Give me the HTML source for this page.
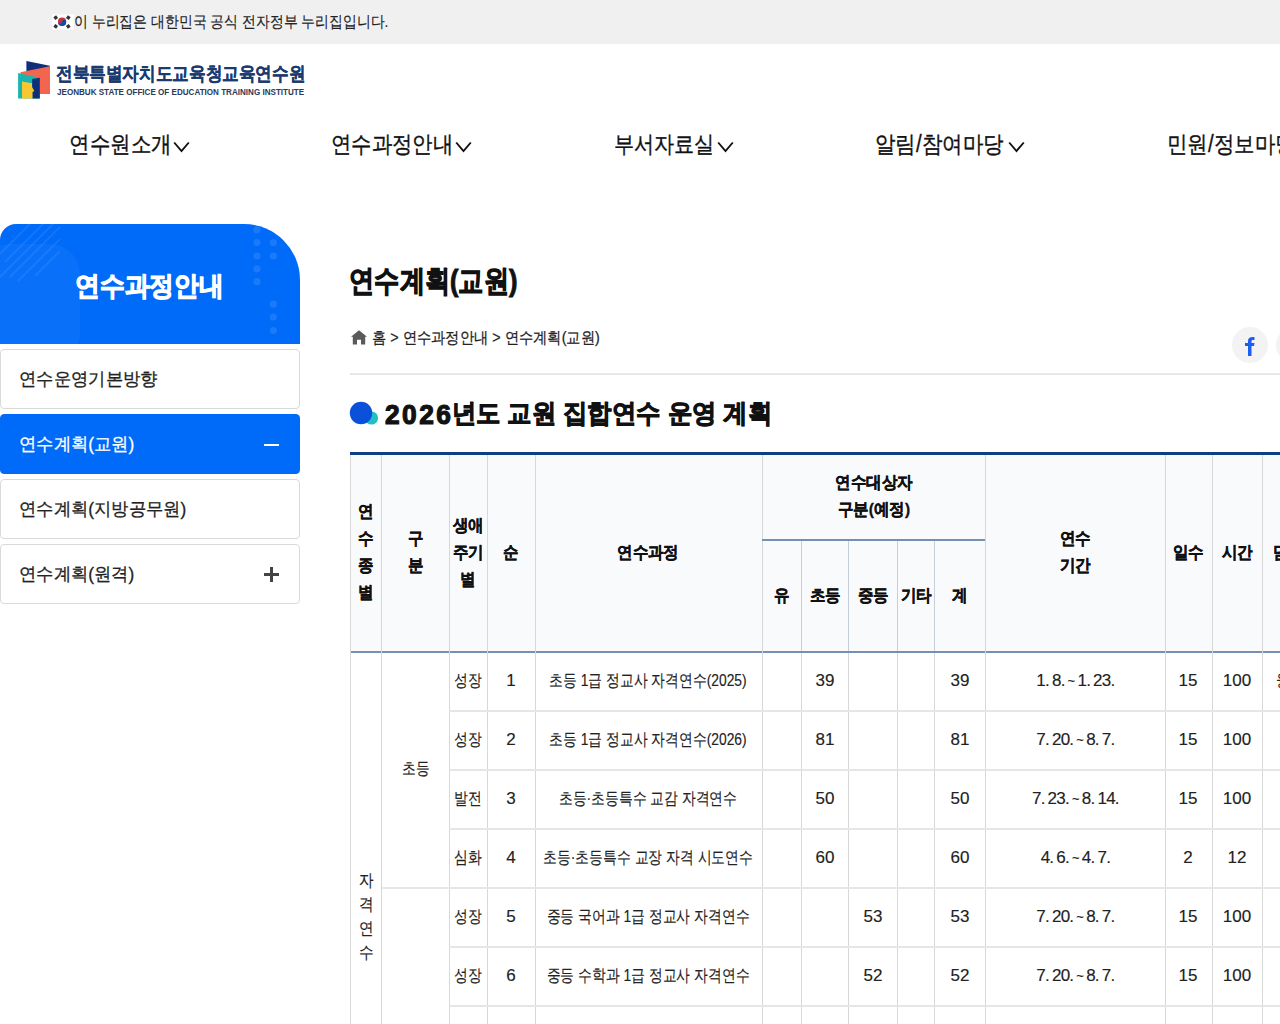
<!DOCTYPE html><html lang="ko"><head><meta charset="utf-8"><title>연수계획(교원)</title><style>
*{margin:0;padding:0;box-sizing:border-box}
html,body{width:1280px;height:1024px;overflow:hidden;background:#fff}
body{font-family:"Liberation Sans", sans-serif;color:#222;position:relative}
.ab{position:absolute;white-space:nowrap}
.ln{position:absolute}
.sk{-webkit-text-stroke:0.15px currentColor}
.skb{-webkit-text-stroke:0.5px currentColor}
.sktb{-webkit-text-stroke:0.35px currentColor}
</style></head><body>
<div class="ln" style="left:0;top:0;width:1280px;height:44px;background:#f0f0f0"></div>
<svg class="ab" style="left:52px;top:14px" width="22" height="16" viewBox="0 0 22 16">
<rect x="0" y="0.5" width="22" height="15" fill="#fff"/>
<circle cx="10.1" cy="7.7" r="4.1" fill="#c9303e"/>
<path d="M6 7.9 A4.1 4.1 0 0 0 14.2 7.9 A2.05 2.05 0 0 0 10.1 7.7 A2.05 2.05 0 0 1 6 7.5Z" fill="#0d4fa3"/>
<g fill="#333"><rect x="2" y="2" width="3.4" height="3.4" transform="rotate(-35 3.7 3.7)"/><rect x="14.6" y="2" width="3.4" height="3.4" transform="rotate(35 16.3 3.7)"/>
<rect x="2" y="10.6" width="3.4" height="3.4" transform="rotate(35 3.7 12.3)"/><rect x="14.6" y="10.6" width="3.4" height="3.4" transform="rotate(-35 16.3 12.3)"/></g>
</svg>
<div class="ab sk" id="t_top" style="left:74.00px;top:13.50px;font-size:16px;line-height:16px;font-weight:normal;color:#222;letter-spacing:0.000px;transform:scaleX(0.8670);transform-origin:0 0;">이 누리집은 대한민국 공식 전자정부 누리집입니다.</div>
<svg class="ab" style="left:17px;top:60px" width="35" height="40" viewBox="0 0 35 40">
<polygon points="9.4,1 32.8,5.8 32.8,14 9.4,14" fill="#0f2f7a"/>
<polygon points="3.3,12.2 33,6.2 33,34 12,34" fill="#f26650"/>
<polygon points="1.1,13.1 22.8,17.7 22.8,38.6 1.1,38.6" fill="#1ab5b0"/>
<polygon points="15.2,19 22.8,17.7 22.8,38.6 15.2,38.6" fill="#0f2f7a"/>
<polygon points="5,21.4 15,23.3 15,27 17.4,31.1 15.5,32 15.5,38.6 5,38.6" fill="#f9c830"/>
</svg>
<div class="ab skb" id="t_logo" style="left:56.00px;top:64.00px;font-size:19px;line-height:19px;font-weight:bold;color:#1b3a6e;letter-spacing:0.000px;transform:scaleX(0.8748);transform-origin:0 0;-webkit-text-stroke:0.25px currentColor;">전북특별자치도교육청교육연수원</div>
<div class="ab skb" id="t_logo_en" style="left:57.00px;top:87.50px;font-size:9.2px;line-height:9.2px;font-weight:bold;color:#2b3a5a;letter-spacing:0.000px;transform:scaleX(0.8788);transform-origin:0 0;-webkit-text-stroke:0px currentColor;">JEONBUK STATE OFFICE OF EDUCATION TRAINING INSTITUTE</div>
<div class="ab sk" id="n1" style="left:69.00px;top:133.00px;font-size:23px;line-height:23px;font-weight:normal;color:#111;letter-spacing:0.000px;transform:scaleX(0.8920);transform-origin:0 0;-webkit-text-stroke:0.35px currentColor;">연수원소개</div>
<svg class="ab" style="left:173px;top:141px" width="17" height="12" viewBox="0 0 17 12"><path d="M1.2 1.5 L8.5 10 L15.8 1.5" fill="none" stroke="#111" stroke-width="1.9"/></svg>
<div class="ab sk" id="n2" style="left:331.40px;top:132.60px;font-size:23px;line-height:23px;font-weight:normal;color:#111;letter-spacing:0.000px;transform:scaleX(0.8844);transform-origin:0 0;-webkit-text-stroke:0.35px currentColor;">연수과정안내</div>
<svg class="ab" style="left:455px;top:141px" width="17" height="12" viewBox="0 0 17 12"><path d="M1.2 1.5 L8.5 10 L15.8 1.5" fill="none" stroke="#111" stroke-width="1.9"/></svg>
<div class="ab sk" id="n3" style="left:614.00px;top:132.75px;font-size:23px;line-height:23px;font-weight:normal;color:#111;letter-spacing:0.000px;transform:scaleX(0.8747);transform-origin:0 0;-webkit-text-stroke:0.35px currentColor;">부서자료실</div>
<svg class="ab" style="left:717px;top:141px" width="17" height="12" viewBox="0 0 17 12"><path d="M1.2 1.5 L8.5 10 L15.8 1.5" fill="none" stroke="#111" stroke-width="1.9"/></svg>
<div class="ab sk" id="n4" style="left:875.20px;top:133.00px;font-size:23px;line-height:23px;font-weight:normal;color:#111;letter-spacing:0.000px;transform:scaleX(0.8894);transform-origin:0 0;-webkit-text-stroke:0.35px currentColor;">알림/참여마당</div>
<svg class="ab" style="left:1008px;top:141px" width="17" height="12" viewBox="0 0 17 12"><path d="M1.2 1.5 L8.5 10 L15.8 1.5" fill="none" stroke="#111" stroke-width="1.9"/></svg>
<div class="ab sk" id="n5" style="left:1166.80px;top:133.00px;font-size:23px;line-height:23px;font-weight:normal;color:#111;letter-spacing:0.000px;transform:scaleX(0.8894);transform-origin:0 0;-webkit-text-stroke:0.35px currentColor;">민원/정보마당</div>
<svg class="ab" style="left:1299px;top:141px" width="17" height="12" viewBox="0 0 17 12"><path d="M1.2 1.5 L8.5 10 L15.8 1.5" fill="none" stroke="#111" stroke-width="1.9"/></svg>
<div class="ab" style="left:0;top:224px;width:300px;height:120px;background:#006bf9;border-radius:16px 56px 0 0;overflow:hidden">
<svg width="300" height="120" style="position:absolute;left:0;top:0">
<rect x="-20" y="20" width="100" height="120" rx="30" fill="rgba(255,255,255,0.035)"/>
<g stroke="rgba(255,255,255,0.09)" stroke-width="1.6">
<path d="M0 30 L50 -20"/><path d="M5 38 L58 -15"/><path d="M0 53 L58 -5"/><path d="M10 53 L60 3"/><path d="M18 57 L60 15"/><path d="M35 52 L60 27"/>
</g>
<g fill="rgba(255,255,255,0.10)">
<circle cx="257" cy="5.8" r="3.6"/><circle cx="257" cy="18.6" r="3.6"/><circle cx="257" cy="32" r="3.6"/><circle cx="257" cy="44.8" r="3.6"/><circle cx="257" cy="57.7" r="3.6"/>
<circle cx="273.3" cy="18.6" r="3.6"/><circle cx="273.3" cy="32" r="3.6"/><circle cx="273.3" cy="80.2" r="3.6"/><circle cx="273.3" cy="93" r="3.6"/><circle cx="273.3" cy="106.5" r="3.6"/>
</g>
</svg></div>
<div class="ab skb" id="t_side" style="left:75.00px;top:272.70px;font-size:27px;line-height:27px;font-weight:bold;color:#fff;letter-spacing:0.000px;transform:scaleX(0.9183);transform-origin:0 0;-webkit-text-stroke:1.1px currentColor;">연수과정안내</div>
<div class="ln" style="left:0;top:349px;width:300px;height:60px;border-radius:4px;background:#fff;border:1px solid #d9d9d9;"></div>
<div class="ab sk" id="s1" style="left:19.20px;top:370.40px;font-size:18px;line-height:18px;font-weight:normal;color:#222;letter-spacing:0.000px;transform:scaleX(0.9613);transform-origin:0 0;-webkit-text-stroke:0.3px currentColor;">연수운영기본방향</div>
<div class="ln" style="left:0;top:414px;width:300px;height:60px;border-radius:4px;background:#006bf9;border:1px solid #006bf9;"></div>
<div class="ab sk" id="s2" style="left:19.20px;top:435.40px;font-size:18px;line-height:18px;font-weight:normal;color:#fff;letter-spacing:0.000px;transform:scaleX(0.9613);transform-origin:0 0;-webkit-text-stroke:0.3px currentColor;">연수계획(교원)</div>
<div class="ln" style="left:264px;top:444px;width:15px;height:2px;background:#fff"></div>
<div class="ln" style="left:0;top:479px;width:300px;height:60px;border-radius:4px;background:#fff;border:1px solid #d9d9d9;"></div>
<div class="ab sk" id="s3" style="left:19.20px;top:500.40px;font-size:18px;line-height:18px;font-weight:normal;color:#222;letter-spacing:0.000px;transform:scaleX(0.9613);transform-origin:0 0;-webkit-text-stroke:0.3px currentColor;">연수계획(지방공무원)</div>
<div class="ln" style="left:0;top:544px;width:300px;height:60px;border-radius:4px;background:#fff;border:1px solid #d9d9d9;"></div>
<div class="ab sk" id="s4" style="left:19.20px;top:565.40px;font-size:18px;line-height:18px;font-weight:normal;color:#222;letter-spacing:0.000px;transform:scaleX(0.9613);transform-origin:0 0;-webkit-text-stroke:0.3px currentColor;">연수계획(원격)</div>
<div class="ln" style="left:264px;top:573px;width:15px;height:3px;background:#444"></div><div class="ln" style="left:270px;top:567px;width:3px;height:15px;background:#444"></div>
<div class="ab skb" id="t_title" style="left:348.60px;top:265.60px;font-size:30px;line-height:30px;font-weight:bold;color:#111;letter-spacing:0.000px;transform:scaleX(0.8418);transform-origin:0 0;-webkit-text-stroke:1.0px currentColor;">연수계획(교원)</div>
<svg class="ab" style="left:350px;top:330px" width="18" height="15" viewBox="0 0 18 15"><path d="M9 0.3 L17 6.8 L15.2 6.8 L15.2 14.5 L11 14.5 L11 9.8 L7 9.8 L7 14.5 L2.8 14.5 L2.8 6.8 L1 6.8Z" fill="#5a5a5a"/></svg>
<div class="ab sk" id="t_bc" style="left:372.00px;top:330.00px;font-size:16px;line-height:16px;font-weight:normal;color:#222;letter-spacing:0.000px;transform:scaleX(0.8925);transform-origin:0 0;-webkit-text-stroke:0.25px currentColor;">홈 &gt; 연수과정안내 &gt; 연수계획(교원)</div>
<div class="ln" style="left:1232px;top:327px;width:36px;height:36px;border-radius:50%;background:#f3f3f3"></div>
<div class="ln" style="left:1276px;top:327px;width:36px;height:36px;border-radius:50%;background:#f3f3f3"></div>
<svg class="ab" style="left:1243px;top:336px" width="14" height="20" viewBox="0 0 14 20"><path d="M5 20 V10 H2 V7 H5 V5 C5 2 7 1 9.5 1 C10.5 1 11.5 1.2 11.5 1.2 V4 H10 C8.7 4 8.5 4.7 8.5 5.5 V7 H11.5 L11 10 H8.5 V20Z" fill="#1a5ff0"/></svg>
<div class="ln" style="left:350px;top:373px;width:930px;height:2px;background:#e8e8e8"></div>
<svg class="ab" style="left:349px;top:401px" width="30" height="26" viewBox="0 0 30 26"><circle cx="22.5" cy="17" r="6.6" fill="#22bfc3"/><circle cx="12" cy="12" r="11.2" fill="#0b50d8"/></svg>
<div class="ab skb" id="t_sec" style="left:385.40px;top:399.80px;font-size:26px;line-height:26px;font-weight:bold;color:#111;letter-spacing:0.000px;transform:scaleX(0.9399);transform-origin:0 0;-webkit-text-stroke:0.9px currentColor;"><span style="font-size:28px;letter-spacing:2.6px;vertical-align:-2px;-webkit-text-stroke:1.2px currentColor">202</span><span style="font-size:28px;letter-spacing:0.8px;vertical-align:-2px;-webkit-text-stroke:1.2px currentColor">6</span>년도 교원 집합연수 운영 계획</div>
<div class="ln" style="left:350px;top:455px;width:930px;height:196px;background:#f9fafc"></div>
<div class="ln" style="left:350px;top:452px;width:930px;height:3px;background:#0e3f80"></div>
<div class="ln" style="left:350px;top:651px;width:930px;height:2px;background:#7590b2"></div>
<div class="ln" style="left:350px;top:455px;width:1px;height:570px;background:#d8d8d8"></div>
<div class="ln" style="left:381px;top:455px;width:1px;height:570px;background:#d8d8d8"></div>
<div class="ln" style="left:449px;top:455px;width:1px;height:570px;background:#d8d8d8"></div>
<div class="ln" style="left:487px;top:455px;width:1px;height:570px;background:#d8d8d8"></div>
<div class="ln" style="left:535px;top:455px;width:1px;height:570px;background:#d8d8d8"></div>
<div class="ln" style="left:762px;top:455px;width:1px;height:570px;background:#d8d8d8"></div>
<div class="ln" style="left:985px;top:455px;width:1px;height:570px;background:#d8d8d8"></div>
<div class="ln" style="left:1165px;top:455px;width:1px;height:570px;background:#d8d8d8"></div>
<div class="ln" style="left:1212px;top:455px;width:1px;height:570px;background:#d8d8d8"></div>
<div class="ln" style="left:1262px;top:455px;width:1px;height:570px;background:#d8d8d8"></div>
<div class="ln" style="left:762px;top:539px;width:223px;height:1.5px;background:#7590b2"></div>
<div class="ln" style="left:801px;top:541px;width:1px;height:110px;background:#c5cfdc"></div>
<div class="ln" style="left:801px;top:653px;width:1px;height:372px;background:#d8d8d8"></div>
<div class="ln" style="left:848px;top:541px;width:1px;height:110px;background:#c5cfdc"></div>
<div class="ln" style="left:848px;top:653px;width:1px;height:372px;background:#d8d8d8"></div>
<div class="ln" style="left:897px;top:541px;width:1px;height:110px;background:#c5cfdc"></div>
<div class="ln" style="left:897px;top:653px;width:1px;height:372px;background:#d8d8d8"></div>
<div class="ln" style="left:934px;top:541px;width:1px;height:110px;background:#c5cfdc"></div>
<div class="ln" style="left:934px;top:653px;width:1px;height:372px;background:#d8d8d8"></div>
<div class="ab sktb" style="left:296px;width:140px;top:498.40px;line-height:27px;text-align:center;font-weight:bold;font-size:17px;letter-spacing:0.000px;transform:scaleX(0.9114);color:#111">연<br>수<br>종<br>별</div>
<div class="ab sktb" style="left:345.5px;width:140px;top:525.40px;line-height:27px;text-align:center;font-weight:bold;font-size:17px;letter-spacing:0.000px;transform:scaleX(0.9114);color:#111">구<br>분</div>
<div class="ab sktb" style="left:398px;width:140px;top:511.90px;line-height:27px;text-align:center;font-weight:bold;font-size:17px;letter-spacing:0.000px;transform:scaleX(0.9114);color:#111">생애<br>주기<br>별</div>
<div class="ab sktb" style="left:441px;width:140px;top:538.90px;line-height:27px;text-align:center;font-weight:bold;font-size:17px;letter-spacing:0.000px;transform:scaleX(0.9114);color:#111">순</div>
<div class="ab sktb" id="th_course" style="left:578.2px;width:140px;top:538.90px;line-height:27px;text-align:center;font-weight:bold;font-size:17px;letter-spacing:0.000px;transform:scaleX(0.9114);color:#111">연수과정</div>
<div class="ab sktb" style="left:803.5px;width:140px;top:469.40px;line-height:27px;text-align:center;font-weight:bold;font-size:17px;letter-spacing:0.000px;transform:scaleX(0.9114);color:#111">연수대상자<br>구분(예정)</div>
<div class="ab sktb" style="left:712px;width:140px;top:581.90px;line-height:27px;text-align:center;font-weight:bold;font-size:17px;letter-spacing:0.000px;transform:scaleX(0.9114);color:#111">유</div>
<div class="ab sktb" style="left:755px;width:140px;top:581.90px;line-height:27px;text-align:center;font-weight:bold;font-size:17px;letter-spacing:0.000px;transform:scaleX(0.9114);color:#111">초등</div>
<div class="ab sktb" style="left:803px;width:140px;top:581.90px;line-height:27px;text-align:center;font-weight:bold;font-size:17px;letter-spacing:0.000px;transform:scaleX(0.9114);color:#111">중등</div>
<div class="ab sktb" style="left:846px;width:140px;top:581.90px;line-height:27px;text-align:center;font-weight:bold;font-size:17px;letter-spacing:0.000px;transform:scaleX(0.9114);color:#111">기타</div>
<div class="ab sktb" style="left:890px;width:140px;top:581.90px;line-height:27px;text-align:center;font-weight:bold;font-size:17px;letter-spacing:0.000px;transform:scaleX(0.9114);color:#111">계</div>
<div class="ab sktb" style="left:1005px;width:140px;top:525.40px;line-height:27px;text-align:center;font-weight:bold;font-size:17px;letter-spacing:0.000px;transform:scaleX(0.9114);color:#111">연수<br>기간</div>
<div class="ab sktb" style="left:1118px;width:140px;top:538.90px;line-height:27px;text-align:center;font-weight:bold;font-size:17px;letter-spacing:0.000px;transform:scaleX(0.9114);color:#111">일수</div>
<div class="ab sktb" style="left:1167px;width:140px;top:538.90px;line-height:27px;text-align:center;font-weight:bold;font-size:17px;letter-spacing:0.000px;transform:scaleX(0.9114);color:#111">시간</div>
<div class="ab sktb" style="left:1218px;width:140px;top:538.90px;line-height:27px;text-align:center;font-weight:bold;font-size:17px;letter-spacing:0.000px;transform:scaleX(0.9114);color:#111">담당</div>
<div class="ln" style="left:449px;top:710px;width:831px;height:2px;background:#e6e6e6"></div>
<div class="ab sk" style="left:268px;width:400px;top:671.40px;line-height:20px;text-align:center;font-size:17px;letter-spacing:0.000px;word-spacing:0px;transform:scaleX(0.8128);color:#222">성장</div>
<div class="ab sk" style="left:311px;width:400px;top:671.40px;line-height:20px;text-align:center;font-size:17px;letter-spacing:0.000px;word-spacing:0px;transform:scaleX(1.0000);color:#222">1</div>
<div class="ab sk" id="td_c0" style="left:448.29999999999995px;width:400px;top:671.40px;line-height:20px;text-align:center;font-size:17px;letter-spacing:0.000px;word-spacing:0px;transform:scaleX(0.8128);color:#222">초등 1급 정교사 자격연수(2025)</div>
<div class="ab sk" style="left:625px;width:400px;top:671.40px;line-height:20px;text-align:center;font-size:17px;letter-spacing:0.000px;word-spacing:0px;transform:scaleX(1.0000);color:#222">39</div>
<div class="ab sk" style="left:760px;width:400px;top:671.40px;line-height:20px;text-align:center;font-size:17px;letter-spacing:0.000px;word-spacing:0px;transform:scaleX(1.0000);color:#222">39</div>
<div class="ab sk" id="td_d0" style="left:875.4000000000001px;width:400px;top:671.40px;line-height:20px;text-align:center;font-size:17px;letter-spacing:-0.750px;word-spacing:-1.0px;transform:scaleX(1.0000);color:#222">1. 8. <span style="font-size:13px;vertical-align:1px">~</span> 1. 23.</div>
<div class="ab sk" style="left:988px;width:400px;top:671.40px;line-height:20px;text-align:center;font-size:17px;letter-spacing:0.000px;word-spacing:0px;transform:scaleX(1.0000);color:#222">15</div>
<div class="ab sk" style="left:1037px;width:400px;top:671.40px;line-height:20px;text-align:center;font-size:17px;letter-spacing:0.000px;word-spacing:0px;transform:scaleX(1.0000);color:#222">100</div>
<div class="ab sk" style="left:1090px;width:400px;top:671.40px;line-height:20px;text-align:center;font-size:17px;letter-spacing:0.000px;word-spacing:0px;transform:scaleX(0.8128);color:#222">융합</div>
<div class="ln" style="left:449px;top:769px;width:831px;height:2px;background:#e6e6e6"></div>
<div class="ab sk" style="left:268px;width:400px;top:730.40px;line-height:20px;text-align:center;font-size:17px;letter-spacing:0.000px;word-spacing:0px;transform:scaleX(0.8128);color:#222">성장</div>
<div class="ab sk" style="left:311px;width:400px;top:730.40px;line-height:20px;text-align:center;font-size:17px;letter-spacing:0.000px;word-spacing:0px;transform:scaleX(1.0000);color:#222">2</div>
<div class="ab sk" id="td_c1" style="left:448.29999999999995px;width:400px;top:730.40px;line-height:20px;text-align:center;font-size:17px;letter-spacing:0.000px;word-spacing:0px;transform:scaleX(0.8128);color:#222">초등 1급 정교사 자격연수(2026)</div>
<div class="ab sk" style="left:625px;width:400px;top:730.40px;line-height:20px;text-align:center;font-size:17px;letter-spacing:0.000px;word-spacing:0px;transform:scaleX(1.0000);color:#222">81</div>
<div class="ab sk" style="left:760px;width:400px;top:730.40px;line-height:20px;text-align:center;font-size:17px;letter-spacing:0.000px;word-spacing:0px;transform:scaleX(1.0000);color:#222">81</div>
<div class="ab sk" id="td_d1" style="left:875.4000000000001px;width:400px;top:730.40px;line-height:20px;text-align:center;font-size:17px;letter-spacing:-0.750px;word-spacing:-1.0px;transform:scaleX(1.0000);color:#222">7. 20. <span style="font-size:13px;vertical-align:1px">~</span> 8. 7.</div>
<div class="ab sk" style="left:988px;width:400px;top:730.40px;line-height:20px;text-align:center;font-size:17px;letter-spacing:0.000px;word-spacing:0px;transform:scaleX(1.0000);color:#222">15</div>
<div class="ab sk" style="left:1037px;width:400px;top:730.40px;line-height:20px;text-align:center;font-size:17px;letter-spacing:0.000px;word-spacing:0px;transform:scaleX(1.0000);color:#222">100</div>
<div class="ln" style="left:449px;top:828px;width:831px;height:2px;background:#e6e6e6"></div>
<div class="ab sk" style="left:268px;width:400px;top:789.40px;line-height:20px;text-align:center;font-size:17px;letter-spacing:0.000px;word-spacing:0px;transform:scaleX(0.8128);color:#222">발전</div>
<div class="ab sk" style="left:311px;width:400px;top:789.40px;line-height:20px;text-align:center;font-size:17px;letter-spacing:0.000px;word-spacing:0px;transform:scaleX(1.0000);color:#222">3</div>
<div class="ab sk" id="td_c2" style="left:448.29999999999995px;width:400px;top:789.40px;line-height:20px;text-align:center;font-size:17px;letter-spacing:0.000px;word-spacing:0px;transform:scaleX(0.8128);color:#222">초등·초등특수 교감 자격연수</div>
<div class="ab sk" style="left:625px;width:400px;top:789.40px;line-height:20px;text-align:center;font-size:17px;letter-spacing:0.000px;word-spacing:0px;transform:scaleX(1.0000);color:#222">50</div>
<div class="ab sk" style="left:760px;width:400px;top:789.40px;line-height:20px;text-align:center;font-size:17px;letter-spacing:0.000px;word-spacing:0px;transform:scaleX(1.0000);color:#222">50</div>
<div class="ab sk" id="td_d2" style="left:875.4000000000001px;width:400px;top:789.40px;line-height:20px;text-align:center;font-size:17px;letter-spacing:-0.750px;word-spacing:-1.0px;transform:scaleX(1.0000);color:#222">7. 23. <span style="font-size:13px;vertical-align:1px">~</span> 8. 14.</div>
<div class="ab sk" style="left:988px;width:400px;top:789.40px;line-height:20px;text-align:center;font-size:17px;letter-spacing:0.000px;word-spacing:0px;transform:scaleX(1.0000);color:#222">15</div>
<div class="ab sk" style="left:1037px;width:400px;top:789.40px;line-height:20px;text-align:center;font-size:17px;letter-spacing:0.000px;word-spacing:0px;transform:scaleX(1.0000);color:#222">100</div>
<div class="ln" style="left:382px;top:887px;width:898px;height:2px;background:#e6e6e6"></div>
<div class="ab sk" style="left:268px;width:400px;top:848.40px;line-height:20px;text-align:center;font-size:17px;letter-spacing:0.000px;word-spacing:0px;transform:scaleX(0.8128);color:#222">심화</div>
<div class="ab sk" style="left:311px;width:400px;top:848.40px;line-height:20px;text-align:center;font-size:17px;letter-spacing:0.000px;word-spacing:0px;transform:scaleX(1.0000);color:#222">4</div>
<div class="ab sk" id="td_c3" style="left:448.29999999999995px;width:400px;top:848.40px;line-height:20px;text-align:center;font-size:17px;letter-spacing:0.000px;word-spacing:0px;transform:scaleX(0.8128);color:#222">초등·초등특수 교장 자격 시도연수</div>
<div class="ab sk" style="left:625px;width:400px;top:848.40px;line-height:20px;text-align:center;font-size:17px;letter-spacing:0.000px;word-spacing:0px;transform:scaleX(1.0000);color:#222">60</div>
<div class="ab sk" style="left:760px;width:400px;top:848.40px;line-height:20px;text-align:center;font-size:17px;letter-spacing:0.000px;word-spacing:0px;transform:scaleX(1.0000);color:#222">60</div>
<div class="ab sk" id="td_d3" style="left:875.4000000000001px;width:400px;top:848.40px;line-height:20px;text-align:center;font-size:17px;letter-spacing:-0.750px;word-spacing:-1.0px;transform:scaleX(1.0000);color:#222">4. 6. <span style="font-size:13px;vertical-align:1px">~</span> 4. 7.</div>
<div class="ab sk" style="left:988px;width:400px;top:848.40px;line-height:20px;text-align:center;font-size:17px;letter-spacing:0.000px;word-spacing:0px;transform:scaleX(1.0000);color:#222">2</div>
<div class="ab sk" style="left:1037px;width:400px;top:848.40px;line-height:20px;text-align:center;font-size:17px;letter-spacing:0.000px;word-spacing:0px;transform:scaleX(1.0000);color:#222">12</div>
<div class="ln" style="left:449px;top:946px;width:831px;height:2px;background:#e6e6e6"></div>
<div class="ab sk" style="left:268px;width:400px;top:907.40px;line-height:20px;text-align:center;font-size:17px;letter-spacing:0.000px;word-spacing:0px;transform:scaleX(0.8128);color:#222">성장</div>
<div class="ab sk" style="left:311px;width:400px;top:907.40px;line-height:20px;text-align:center;font-size:17px;letter-spacing:0.000px;word-spacing:0px;transform:scaleX(1.0000);color:#222">5</div>
<div class="ab sk" id="td_c4" style="left:448.29999999999995px;width:400px;top:907.40px;line-height:20px;text-align:center;font-size:17px;letter-spacing:0.000px;word-spacing:0px;transform:scaleX(0.8128);color:#222">중등 국어과 1급 정교사 자격연수</div>
<div class="ab sk" style="left:673px;width:400px;top:907.40px;line-height:20px;text-align:center;font-size:17px;letter-spacing:0.000px;word-spacing:0px;transform:scaleX(1.0000);color:#222">53</div>
<div class="ab sk" style="left:760px;width:400px;top:907.40px;line-height:20px;text-align:center;font-size:17px;letter-spacing:0.000px;word-spacing:0px;transform:scaleX(1.0000);color:#222">53</div>
<div class="ab sk" id="td_d4" style="left:875.4000000000001px;width:400px;top:907.40px;line-height:20px;text-align:center;font-size:17px;letter-spacing:-0.750px;word-spacing:-1.0px;transform:scaleX(1.0000);color:#222">7. 20. <span style="font-size:13px;vertical-align:1px">~</span> 8. 7.</div>
<div class="ab sk" style="left:988px;width:400px;top:907.40px;line-height:20px;text-align:center;font-size:17px;letter-spacing:0.000px;word-spacing:0px;transform:scaleX(1.0000);color:#222">15</div>
<div class="ab sk" style="left:1037px;width:400px;top:907.40px;line-height:20px;text-align:center;font-size:17px;letter-spacing:0.000px;word-spacing:0px;transform:scaleX(1.0000);color:#222">100</div>
<div class="ln" style="left:449px;top:1005px;width:831px;height:2px;background:#e6e6e6"></div>
<div class="ab sk" style="left:268px;width:400px;top:966.40px;line-height:20px;text-align:center;font-size:17px;letter-spacing:0.000px;word-spacing:0px;transform:scaleX(0.8128);color:#222">성장</div>
<div class="ab sk" style="left:311px;width:400px;top:966.40px;line-height:20px;text-align:center;font-size:17px;letter-spacing:0.000px;word-spacing:0px;transform:scaleX(1.0000);color:#222">6</div>
<div class="ab sk" id="td_c5" style="left:448.29999999999995px;width:400px;top:966.40px;line-height:20px;text-align:center;font-size:17px;letter-spacing:0.000px;word-spacing:0px;transform:scaleX(0.8128);color:#222">중등 수학과 1급 정교사 자격연수</div>
<div class="ab sk" style="left:673px;width:400px;top:966.40px;line-height:20px;text-align:center;font-size:17px;letter-spacing:0.000px;word-spacing:0px;transform:scaleX(1.0000);color:#222">52</div>
<div class="ab sk" style="left:760px;width:400px;top:966.40px;line-height:20px;text-align:center;font-size:17px;letter-spacing:0.000px;word-spacing:0px;transform:scaleX(1.0000);color:#222">52</div>
<div class="ab sk" id="td_d5" style="left:875.4000000000001px;width:400px;top:966.40px;line-height:20px;text-align:center;font-size:17px;letter-spacing:-0.750px;word-spacing:-1.0px;transform:scaleX(1.0000);color:#222">7. 20. <span style="font-size:13px;vertical-align:1px">~</span> 8. 7.</div>
<div class="ab sk" style="left:988px;width:400px;top:966.40px;line-height:20px;text-align:center;font-size:17px;letter-spacing:0.000px;word-spacing:0px;transform:scaleX(1.0000);color:#222">15</div>
<div class="ab sk" style="left:1037px;width:400px;top:966.40px;line-height:20px;text-align:center;font-size:17px;letter-spacing:0.000px;word-spacing:0px;transform:scaleX(1.0000);color:#222">100</div>
<div class="ab sk" style="left:346px;width:40px;top:868.9000000000024px;line-height:24px;text-align:center;font-size:17px;transform:scaleX(0.86);color:#222">자<br>격<br>연<br>수</div>
<div class="ab sk" style="left:215.5px;width:400px;top:758.90px;line-height:20px;text-align:center;font-size:17px;letter-spacing:0.000px;word-spacing:0px;transform:scaleX(0.8128);color:#222">초등</div>
</body></html>
